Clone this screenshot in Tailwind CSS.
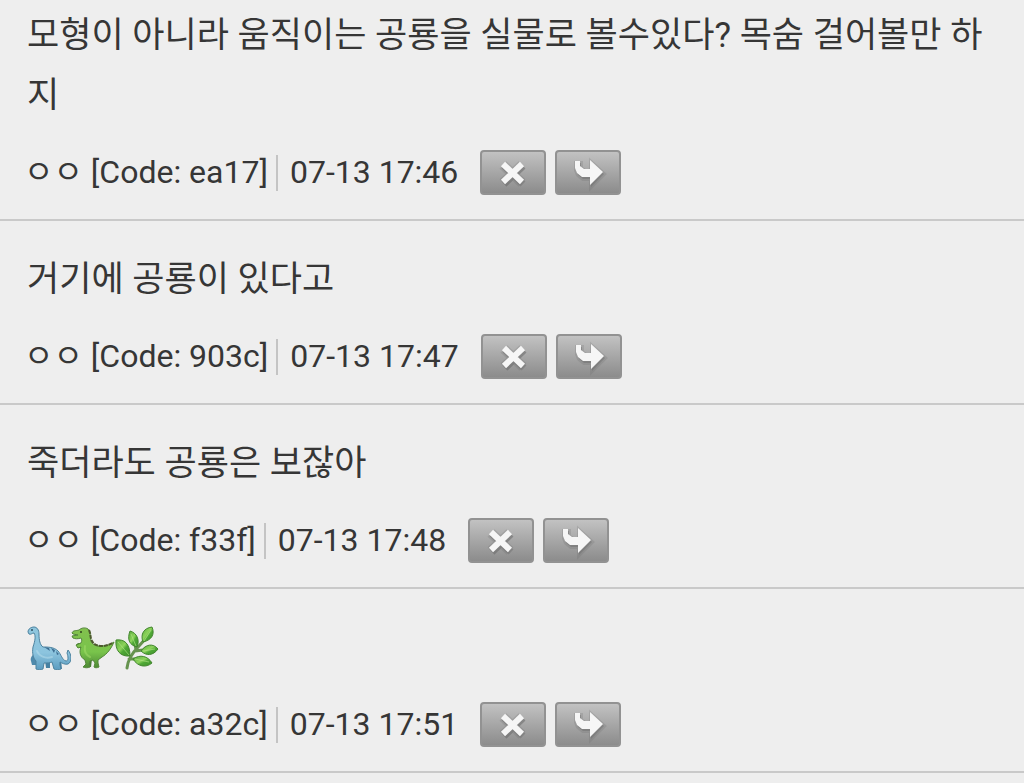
<!DOCTYPE html>
<html lang="ko">
<head>
    <meta charset="UTF-8">
    <meta name="viewport" content="width=device-width, initial-scale=1.0">
    <title>댓글</title>
    <script src="https://cdn.jsdelivr.net/npm/@tailwindcss/browser@4"></script>
</head>
<body class="bg-[#eeeeee] text-[#363636] font-[Roboto,'Noto_Sans_CJK_KR',sans-serif]">

    <!-- shared icons -->
    <svg class="hidden" aria-hidden="true">
        <symbol id="icon-delete" viewBox="0 0 66 45">
            <path d="M23 14l19 18M42 14L23 32" stroke="#666" stroke-opacity=".2" stroke-width="10" transform="translate(0 1)"/>
            <path d="M23 14l19 18M42 14L23 32" stroke="#666" stroke-opacity=".4" stroke-width="7" transform="translate(1 2)"/>
            <path d="M23 14l19 18M42 14L23 32" stroke="#f6f6f6" stroke-width="6"/>
        </symbol>
        <symbol id="icon-reply" viewBox="0 0 66 45">
            <path d="M20 11h5v5l4 3h6v-9l13 12-13 13v-8h-8l-5-4-2-5z" fill="#666" fill-opacity=".4" stroke="#666" stroke-opacity=".2" stroke-width="4" transform="translate(1 2)"/>
            <path d="M20 11h5v5l4 3h6v-9l13 12-13 13v-8h-8l-5-4-2-5z" fill="#f6f6f6"/>
        </symbol>
    </svg>

    <main>
        <article class="border-b-2 border-[#c9c9c9] px-6 pt-[6px] pb-6">
            <p class="pl-[3px] text-[35px] leading-[60px] break-all">모형이 아니라 움직이는 공룡을 실물로 볼수있다? 목숨 걸어볼만 하지</p>
            <div class="mt-6 flex h-[45px] items-center text-[32px] leading-[45px]">
                <span>ㅇㅇ [Code: ea17]</span>
                <span class="ml-2 h-9 w-[2px] bg-[#c4c4c4]"></span>
                <time class="ml-3">07-13 17:46</time>
                <div class="ml-[22px] flex gap-[9px]">
                    <button type="button" aria-label="삭제" class="h-[45px] w-[66px] rounded border-2 border-[#929292] bg-linear-to-b from-[#c2c2c2] to-[#8c8c8c]"><svg class="-m-[2px] h-[45px] w-[66px]" fill="none"><use href="#icon-delete"/></svg></button>
                    <button type="button" aria-label="답글" class="h-[45px] w-[66px] rounded border-2 border-[#929292] bg-linear-to-b from-[#c2c2c2] to-[#8c8c8c]"><svg class="-m-[2px] h-[45px] w-[66px]" fill="none"><use href="#icon-reply"/></svg></button>
                </div>
            </div>
        </article>

        <article class="border-b-2 border-[#c9c9c9] px-6 pt-[29px] pb-6">
            <p class="pl-[3px] text-[35px] leading-[60px] break-all">거기에 공룡이 있다고</p>
            <div class="mt-6 flex h-[45px] items-center text-[32px] leading-[45px]">
                <span>ㅇㅇ [Code: 903c]</span>
                <span class="ml-2 h-9 w-[2px] bg-[#c4c4c4]"></span>
                <time class="ml-3">07-13 17:47</time>
                <div class="ml-[22px] flex gap-[9px]">
                    <button type="button" aria-label="삭제" class="h-[45px] w-[66px] rounded border-2 border-[#929292] bg-linear-to-b from-[#c2c2c2] to-[#8c8c8c]"><svg class="-m-[2px] h-[45px] w-[66px]" fill="none"><use href="#icon-delete"/></svg></button>
                    <button type="button" aria-label="답글" class="h-[45px] w-[66px] rounded border-2 border-[#929292] bg-linear-to-b from-[#c2c2c2] to-[#8c8c8c]"><svg class="-m-[2px] h-[45px] w-[66px]" fill="none"><use href="#icon-reply"/></svg></button>
                </div>
            </div>
        </article>

        <article class="border-b-2 border-[#c9c9c9] px-6 pt-[29px] pb-6">
            <p class="pl-[3px] text-[35px] leading-[60px] break-all">죽더라도 공룡은 보잖아</p>
            <div class="mt-6 flex h-[45px] items-center text-[32px] leading-[45px]">
                <span>ㅇㅇ [Code: f33f]</span>
                <span class="ml-2 h-9 w-[2px] bg-[#c4c4c4]"></span>
                <time class="ml-3">07-13 17:48</time>
                <div class="ml-[22px] flex gap-[9px]">
                    <button type="button" aria-label="삭제" class="h-[45px] w-[66px] rounded border-2 border-[#929292] bg-linear-to-b from-[#c2c2c2] to-[#8c8c8c]"><svg class="-m-[2px] h-[45px] w-[66px]" fill="none"><use href="#icon-delete"/></svg></button>
                    <button type="button" aria-label="답글" class="h-[45px] w-[66px] rounded border-2 border-[#929292] bg-linear-to-b from-[#c2c2c2] to-[#8c8c8c]"><svg class="-m-[2px] h-[45px] w-[66px]" fill="none"><use href="#icon-reply"/></svg></button>
                </div>
            </div>
        </article>

        <article class="border-b-2 border-[#c9c9c9] px-6 pt-[29px] pb-6">
            <div class="flex h-[60px] items-center pl-[3px]">
                <!-- sauropod -->
                <svg class="size-11" viewBox="0 0 44 44" role="img" aria-label="용각류 공룡">
                    <defs>
                        <linearGradient id="sauropod-fill" x1="0" y1="0" x2="0" y2="1">
                            <stop offset="0" stop-color="#8fc6dd"/>
                            <stop offset="0.6" stop-color="#8cc4de"/>
                            <stop offset="1" stop-color="#5c9cc0"/>
                        </linearGradient>
                    </defs>
                    <path d="M8 28c-3 1-5 4-4 7l1 4 4 0 0-4 4-4z" fill="#4f8aac"/>
                    <path d="M18 34l1 8 4 0 0-8zM31 33l1 10 3 0-1-9z" fill="#4580a2"/>
                    <path d="M1 6C1 3 4 1 7 1c3 0 5 3 5 7 0 6 1 11 4 13 5 0 11 0 15 4 3 3 4 9 8 10 3 0 2-5 1-8l1-3c4 5 4 12 0 14-3 1-6-1-8-2l0 3 1 4c-2 1-5 1-7 0l-2-7c-2 1-5 1-8 1l-1 6c-2 1-5 1-7 0l0-8c-3-3-4-8-3-14C8 15 9 10 7 7 5 7 4 9 2 8z" fill="url(#sauropod-fill)" stroke="#4c829f" stroke-width="1"/>
                    <path d="M17 21l5 1 1 3zM24 22l4 2-1 3zM29 25l3 3-2 1z" fill="#3d6d92"/>
                    <path d="M10 25c2 5 8 8 15 6" fill="none" stroke="#b9e0ee" stroke-width="2" stroke-opacity=".5" stroke-linecap="round"/>
                    <circle cx="5" cy="4" r="1" fill="#2d4f63"/>
                </svg>
                <!-- t-rex -->
                <svg class="size-11" viewBox="0 0 44 44" role="img" aria-label="티라노사우루스">
                    <defs>
                        <linearGradient id="rex-fill" x1="0" y1="0" x2="0" y2="1">
                            <stop offset="0" stop-color="#82c04e"/>
                            <stop offset="0.6" stop-color="#79c44b"/>
                            <stop offset="1" stop-color="#4d8a34"/>
                        </linearGradient>
                    </defs>
                    <path d="M12 18l-5-1-2 2 2 3 6 0zM15 32l1 5-2 4 6 0 1-8z" fill="#477d31"/>
                    <path d="M1 7C2 4 5 5 8 4c2-2 6-3 9-1 3 3 2 8 3 12 1 3 4 5 9 5 6 0 10-1 14-4-3 7-7 12-12 15l-4 3 0 3 1 4c-2 1-4 1-5 0l1-4-2-3-3 1-1 3 1 3c-2 1-5 1-7 0l3-3-1-4c-5-3-6-8-4-13l-3 1-2-3 5-2c1-2 1-4 0-5-3 1-6 1-8 0l-1-2 6-1-5-1z" fill="url(#rex-fill)" stroke="#53863a" stroke-width="1"/>
                    <path d="M18 4c2 4 1 8 3 11 2 4 6 5 10 5 5 0 8-2 11-3" fill="none" stroke="#4c5a2d" stroke-width="2" stroke-dasharray="4 1"/>
                    <path d="M14 20c-1 5 1 9 5 11" fill="none" stroke="#a5de6c" stroke-width="2" stroke-opacity=".5" stroke-linecap="round"/>
                    <circle cx="10" cy="6" r="1" fill="#30451f"/>
                </svg>
                <!-- herb -->
                <svg class="size-11" viewBox="0 0 44 44" role="img" aria-label="허브">
                    <defs>
                        <linearGradient id="leaf-fill" x1="0" y1="0" x2="1" y2="1">
                            <stop offset="0" stop-color="#58ab3c"/>
                            <stop offset="0.45" stop-color="#8ed45c"/>
                            <stop offset="0.6" stop-color="#4fa836"/>
                            <stop offset="1" stop-color="#3c902a"/>
                        </linearGradient>
                    </defs>
                    <path d="M12 42c1-10 7-17 12-22l8-9M21 24l-1-6M20 25l8-1M14 33l8 0" fill="none" stroke="#66934f" stroke-width="3" stroke-linecap="round"/>
                    <g fill="url(#leaf-fill)" stroke="#43862f" stroke-width="1">
                        <path d="M1 14c8-1 14 3 14 16C5 31 0 24 1 14z"/>
                        <path d="M15 5c7 2 10 9 7 16-8-2-10-8-7-16z"/>
                        <path d="M37 1c3 7 0 13-9 15-3-8 1-14 9-15z"/>
                        <path d="M43 23c-5 7-12 7-17 2 5-7 12-8 17-2z"/>
                        <path d="M37 37c-6 5-14 4-19-4 7-5 15-3 19 4z"/>
                    </g>
                    <path d="M3 16l11 13M16 8l5 12M36 4l-7 11M40 23l-12 2M34 36l-14-3" fill="none" stroke="#b5e58a" stroke-opacity=".6" stroke-width="1"/>
                </svg>
            </div>
            <div class="mt-6 flex h-[45px] items-center text-[32px] leading-[45px]">
                <span>ㅇㅇ [Code: a32c]</span>
                <span class="ml-2 h-9 w-[2px] bg-[#c4c4c4]"></span>
                <time class="ml-3">07-13 17:51</time>
                <div class="ml-[22px] flex gap-[9px]">
                    <button type="button" aria-label="삭제" class="h-[45px] w-[66px] rounded border-2 border-[#929292] bg-linear-to-b from-[#c2c2c2] to-[#8c8c8c]"><svg class="-m-[2px] h-[45px] w-[66px]" fill="none"><use href="#icon-delete"/></svg></button>
                    <button type="button" aria-label="답글" class="h-[45px] w-[66px] rounded border-2 border-[#929292] bg-linear-to-b from-[#c2c2c2] to-[#8c8c8c]"><svg class="-m-[2px] h-[45px] w-[66px]" fill="none"><use href="#icon-reply"/></svg></button>
                </div>
            </div>
        </article>
    </main>

</body>
</html>
